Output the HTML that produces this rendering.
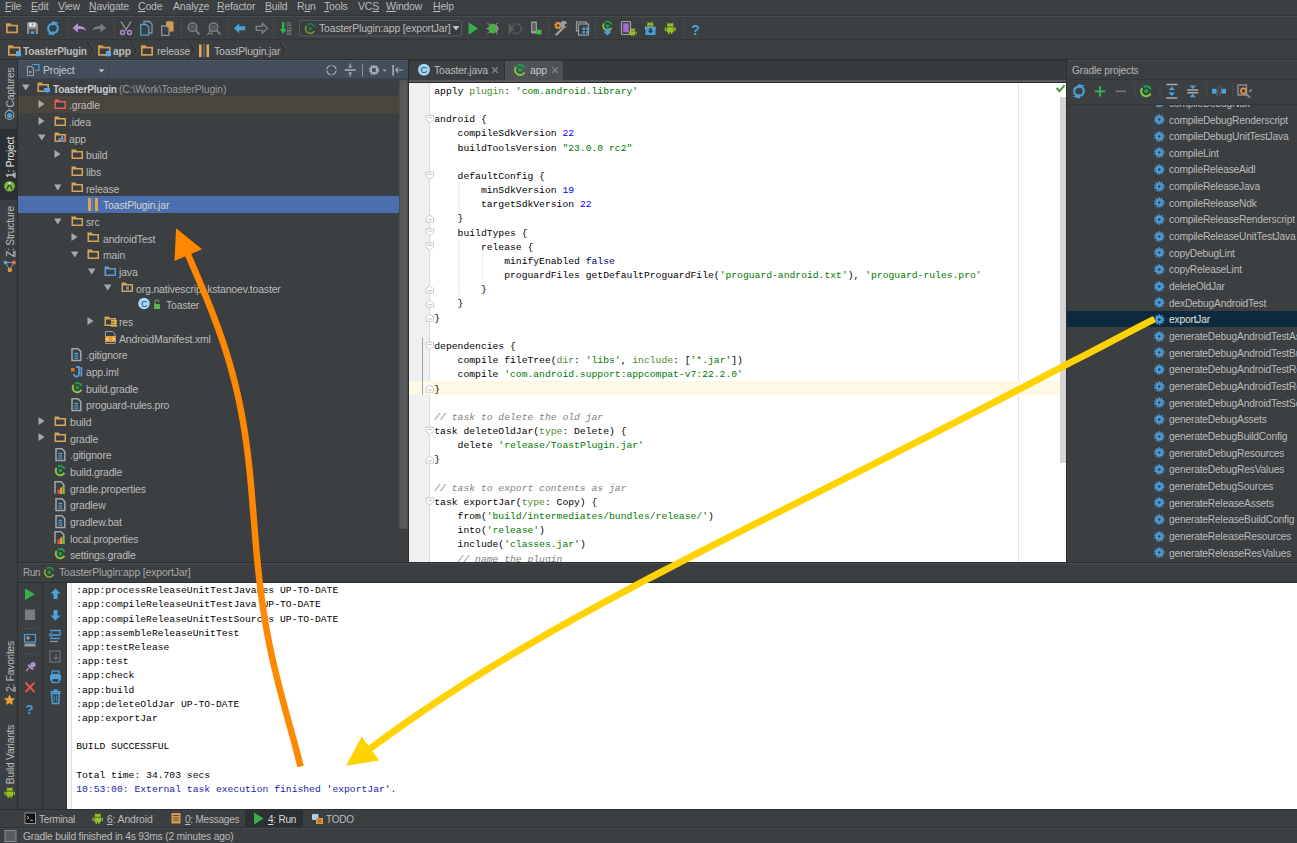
<!DOCTYPE html>
<html><head><meta charset="utf-8">
<style>
*{margin:0;padding:0;box-sizing:border-box}
html,body{width:1297px;height:843px;overflow:hidden;background:#3c3f41}
body{position:relative;font-family:"Liberation Sans",sans-serif;font-size:11px;color:#bbbbbb}
.a{position:absolute}
.t{position:absolute;white-space:pre;line-height:13px}
.mono{font-family:"Liberation Mono",monospace;font-size:9.71px;letter-spacing:0;line-height:14.17px}
svg{position:absolute;overflow:visible}
.u{text-decoration:underline;text-underline-offset:1px}
.s{color:#007800}.n{color:#0000ff}.na{color:#4e8a2a}.c{color:#808080;font-style:italic}.kw{color:#000080}
</style></head><body>

<div class="a" style="left:0px;top:0px;width:1297px;height:15px;background:#3c3f41;"></div>
<div class="a" style="left:0px;top:15px;width:1297px;height:1px;background:#323435;"></div>
<div class="a" style="left:0px;top:16px;width:1297px;height:1px;background:#4a4d4f;"></div>
<div class="a" style="left:0px;top:39px;width:1297px;height:1px;background:#323435;"></div>
<div class="a" style="left:0px;top:59px;width:1297px;height:1px;background:#2f3133;"></div>
<div class="a" style="left:17px;top:60px;width:1px;height:749px;background:#2b2d2e;"></div>
<div class="a" style="left:0px;top:129px;width:17px;height:71px;background:#2d3032;"></div>
<div class="a" style="left:18px;top:60px;width:390px;height:19px;background:#434d5c;border-top:1px solid #4f596b;border-bottom:1px solid #3a4350"></div>
<div class="a" style="left:18px;top:96px;width:381px;height:16.7px;background:#4a463e;"></div>
<div class="a" style="left:18px;top:196px;width:381px;height:16.7px;background:#4b6eaf;"></div>
<div class="a" style="left:398.6px;top:80px;width:9.4px;height:448.7px;background:#58595a;border-radius:2px;box-shadow:inset 1px 0 1px #4a4c4e, inset -1px 0 1px #4a4c4e"></div>
<div class="a" style="left:408px;top:60px;width:1px;height:503px;background:#2b2d2e;"></div>
<div class="a" style="left:505px;top:61px;width:59px;height:19px;background:#4e5254;"></div>
<div class="a" style="left:409px;top:80px;width:658px;height:2px;background:#55595c;"></div>
<div class="a" style="left:409px;top:82px;width:658px;height:1px;background:#2a2c2d;"></div>
<div class="a" style="left:409px;top:83px;width:658px;height:479px;background:#ffffff;"></div>
<div class="a" style="left:409px;top:83px;width:21px;height:479px;background:#f0f0f0;"></div>
<div class="a" style="left:429px;top:83px;width:1px;height:479px;background:#d9d9d9;"></div>
<div class="a" style="left:1018px;top:83px;width:1px;height:479px;background:#e3e3e3;"></div>
<div class="a" style="left:409px;top:381px;width:651px;height:14px;background:#fdf9e5;"></div>
<div class="a" style="left:1060px;top:97px;width:6px;height:366px;background:#d4d4d4;"></div>
<div class="a" style="left:1066px;top:60px;width:1px;height:503px;background:#2b2d2e;"></div>
<div class="a" style="left:1067px;top:60px;width:230px;height:20px;background:#3c3f41;border-top:1px solid #4a4d4f;border-bottom:1px solid #323435"></div>
<div class="a" style="left:1067px;top:104px;width:230px;height:1px;background:#323435;"></div>
<div class="a" style="left:1067px;top:310.5px;width:230px;height:16.5px;background:#0d293e;"></div>
<div class="a" style="left:18px;top:562px;width:1279px;height:1px;background:#2b2d2e;"></div>
<div class="a" style="left:18px;top:563px;width:1279px;height:1px;background:#4a4d4f;"></div>
<div class="a" style="left:18px;top:581.5px;width:1279px;height:1.2px;background:#2b2d2e;"></div>
<div class="a" style="left:42px;top:583px;width:2px;height:226px;background:#333537;"></div>
<div class="a" style="left:66px;top:583px;width:1px;height:226px;background:#333537;"></div>
<div class="a" style="left:67px;top:583px;width:1230px;height:226px;background:#ffffff;"></div>
<div class="a" style="left:67px;top:583px;width:5px;height:226px;background:#f8f8f8;"></div>
<div class="a" style="left:71px;top:583px;width:1px;height:226px;background:#e0e0e0;"></div>
<div class="a" style="left:0px;top:809px;width:1297px;height:1px;background:#2b2d2e;"></div>
<div class="a" style="left:245px;top:810px;width:58px;height:17px;background:#2d3032;"></div>
<div class="a" style="left:0px;top:827px;width:1297px;height:1px;background:#2f3133;"></div>
<div class="a" style="left:0px;top:828px;width:1297px;height:1px;background:#45484a;"></div>
<svg style="left:0px;top:0px;" width="1297" height="843" viewBox="0 0 1297 843"><path d="M6 23.2 h4.5 l1.3 1.5 h6.2 v8.5 h-12z" fill="#d69d52"/><rect x="7.7" y="26.4" width="8.6" height="5.1" fill="#3a3d3f"/><path d="M27 22.5 h9.5 l1.5 1.5 v10 h-11z" fill="#8e9092"/><rect x="29.3" y="22.5" width="6.2" height="4.2" fill="#f0f0f0"/><rect x="31.5" y="23.3" width="2" height="2.4" fill="#8e9092"/><rect x="29" y="29" width="7" height="5" fill="#4e5254"/><rect x="31" y="31.5" width="3" height="2.5" fill="#4aa3e0"/><g transform="translate(53 28.3)"><path d="M-0.5 -4.6 A4.6 4.6 0 0 0 -1.5 4.4" stroke="#4a9fd8" stroke-width="2.1" fill="none"/><path d="M-6 5.6 L1 2.6 L1 7.2z" fill="#4a9fd8"/><path d="M0.5 4.6 A4.6 4.6 0 0 0 1.5 -4.4" stroke="#4a9fd8" stroke-width="2.1" fill="none"/><path d="M6 -5.6 L-1 -2.6 L-1 -7.2z" fill="#4a9fd8"/></g><line x1="68.5" y1="19" x2="68.5" y2="38" stroke="#5a5d5f" stroke-width="1" stroke-dasharray="1 2"/><path d="M72.5 28 l5.5 -5 v3 c4 0 7.5 1 8 5 c-1.5 -2 -4 -2.2 -8 -2 v3.5z" fill="#b38fd6"/><path d="M106 28 l-5.5 -5 v3 c-4 0 -7.5 1 -8 5 c1.5 -2 4 -2.2 8 -2 v3.5z" fill="#787a7c"/><line x1="114" y1="19" x2="114" y2="38" stroke="#5a5d5f" stroke-width="1" stroke-dasharray="1 2"/><path d="M121 21.5 l5.5 9 M131 21.5 l-5.5 9" stroke="#9a9a9a" stroke-width="1.3"/><circle cx="122.5" cy="32.5" r="2" fill="none" stroke="#b38fd6" stroke-width="1.4"/><circle cx="129.5" cy="32.5" r="2" fill="none" stroke="#b38fd6" stroke-width="1.4"/><path d="M144 21.5 h5.5 l2.5 2.5 v9 h-8z" fill="none" stroke="#8e9092" stroke-width="1.3"/><path d="M140.7 24.5 h5.5 l2.5 2.5 v8.2 h-8z" fill="#3c3f41" stroke="#4a9fd8" stroke-width="1.3"/><rect x="166" y="21.5" width="7.5" height="10" fill="#d69d52"/><rect x="168" y="20.8" width="3.5" height="1.8" fill="#8e9092"/><path d="M161.7 26 h5 l2.3 2.3 v7 h-7.3z" fill="#3c3f41" stroke="#8e9092" stroke-width="1.3"/><line x1="181.5" y1="19" x2="181.5" y2="38" stroke="#5a5d5f" stroke-width="1" stroke-dasharray="1 2"/><circle cx="192.5" cy="27.2" r="4.2" fill="none" stroke="#7d7f81" stroke-width="1.6"/><circle cx="192.5" cy="27.2" r="2.6" fill="#5a5d60"/><line x1="195.7" y1="30.4" x2="199.5" y2="34.2" stroke="#7d7f81" stroke-width="2"/><circle cx="213.5" cy="27.2" r="4.2" fill="none" stroke="#7d7f81" stroke-width="1.6"/><circle cx="213.5" cy="27.2" r="2.6" fill="#5a5d60"/><line x1="216.7" y1="30.4" x2="220.5" y2="34.2" stroke="#7d7f81" stroke-width="2"/><path d="M207.5 35.5 l2.5 -6 l2.5 6 M208.5 33.5 h3" stroke="#7d7f81" stroke-width="1" fill="none"/><line x1="228" y1="19" x2="228" y2="38" stroke="#5a5d5f" stroke-width="1" stroke-dasharray="1 2"/><path d="M234 28.3 l5.2 -5 v3 h6 v4 h-6 v3z" fill="#4a9fd8"/><path d="M267.5 28.3 l-5.2 -5 v3 h-6 v4 h6 v3z" fill="none" stroke="#808284" stroke-width="1.3"/><line x1="274" y1="19" x2="274" y2="38" stroke="#5a5d5f" stroke-width="1" stroke-dasharray="1 2"/><path d="M282 22 h2.4 v7 h2 l-3.2 5 l-3.2 -5 h2z" fill="#2fb44a"/><text x="286.5" y="26" font-family="Liberation Sans" font-size="4.6" fill="#a0a0a0">01</text><text x="286.5" y="30.6" font-family="Liberation Sans" font-size="4.6" fill="#a0a0a0">10</text><text x="286.5" y="35.2" font-family="Liberation Sans" font-size="4.6" fill="#a0a0a0">01</text><rect x="299.5" y="20.5" width="162" height="15.5" rx="2" fill="#3a3d3f" stroke="#595c5e"/><path d="M314.35 30.81 A4.7 4.7 0 1 1 306.50 25.71" stroke="#6f8f3c" stroke-width="1.7" fill="none"/><path d="M307.71 24.61 A4.7 4.7 0 0 1 314.56 26.84" stroke="#1d7a3e" stroke-width="1.7" fill="none"/><circle cx="310.2" cy="28.6" r="1.97" fill="#1d7a3e"/><path d="M452.5 26 h7 l-3.5 4.5z" fill="#c0c0c0"/><line x1="463.5" y1="19" x2="463.5" y2="38" stroke="#45484a" stroke-width="1" stroke-dasharray="1 2"/><path d="M468.5 22.3 v12.5 l9.5 -6.25z" fill="#35b04a"/><ellipse cx="492.5" cy="28.6" rx="4.3" ry="4.8" fill="#49b048"/><path d="M496.2 25.5 a2.5 3.8 0 0 1 0 6.4" fill="none" stroke="#9a9a9a" stroke-width="1.4"/><path d="M487.5 23 l2 2 M497.5 23 l-2 2 M486.5 28.6 h2 M497 28.6 h2 M487.5 34 l2 -2 M497.5 34 l-2 -2" stroke="#a8a8a8" stroke-width="0.9"/><path d="M508.5 23 v11.5 l5.5 -5.75z" fill="#5c5e60"/><circle cx="516.5" cy="28.7" r="4.8" fill="none" stroke="#5c5e60" stroke-width="2.2" stroke-dasharray="1.4 1"/><rect x="531" y="21.5" width="6" height="12" rx="1" fill="#9a9c9e"/><rect x="532.3" y="23" width="3.4" height="8" fill="#5e6062"/><circle cx="539" cy="32" r="2.6" fill="#3fbf3f"/><path d="M536 29.8 l1 1 M542 29.8 l-1 1 M536 34.2 l1 -1 M542 34.2 l-1 -1" stroke="#3fbf3f" stroke-width="0.7"/><line x1="549" y1="19" x2="549" y2="38" stroke="#5a5d5f" stroke-width="1" stroke-dasharray="1 2"/><g transform="translate(558.2 25.5)"><circle r="2.6" fill="none" stroke="#e8933a" stroke-width="2.4" stroke-dasharray="1.3 0.7"/><circle r="2.2" fill="none" stroke="#e8933a" stroke-width="1.6"/></g><path d="M556.5 34.5 L564 27" stroke="#9a9c9e" stroke-width="2.4" stroke-linecap="round"/><path d="M563 28 a3.6 3.6 0 1 1 4.2 -4.5 l-2.2 0.6 l-0.6 1.8 l1.8 1 l1.4 -1.8 a3.6 3.6 0 0 1 -4.6 2.9z" fill="#9a9c9e"/><rect x="576.5" y="22" width="10" height="9" fill="none" stroke="#9a9c9e" stroke-width="1.2"/><rect x="578.5" y="24" width="10" height="11" fill="#3c3f41" stroke="#9a9c9e" stroke-width="1.2"/><rect x="582.5" y="27.5" width="2.5" height="2.5" fill="#4a9fd8"/><rect x="586" y="27.5" width="2.5" height="2.5" fill="#4a9fd8"/><rect x="582.5" y="31" width="2.5" height="2.5" fill="#4a9fd8"/><rect x="586" y="31" width="2.5" height="2.5" fill="#4a9fd8"/><line x1="595" y1="19" x2="595" y2="38" stroke="#5a5d5f" stroke-width="1" stroke-dasharray="1 2"/><path d="M611.30 28.02 A4.3 4.3 0 1 1 604.11 23.35" stroke="#8cc63f" stroke-width="1.8" fill="none"/><path d="M605.22 22.35 A4.3 4.3 0 0 1 611.49 24.39" stroke="#1e9e4a" stroke-width="1.8" fill="none"/><circle cx="607.5" cy="26" r="1.81" fill="#1e9e4a"/><path d="M605.7 28.5 h3.6 v3 h2.2 l-4 4 l-4 -4 h2.2z" fill="#4aa3e0"/><rect x="621.5" y="21.5" width="9" height="13" rx="1" fill="none" stroke="#a0a2a4" stroke-width="1.2"/><rect x="623.2" y="23.3" width="5.6" height="9" fill="#a46bd0"/><g transform="translate(628.5 27.5) scale(0.72)"><path d="M2.5 4.5 a3.5 3.2 0 0 1 7 0z" fill="#97c024"/><rect x="2.5" y="5.2" width="7" height="5" rx="0.8" fill="#97c024"/><rect x="0.5" y="5.2" width="1.4" height="4" rx="0.7" fill="#97c024"/><rect x="10.1" y="5.2" width="1.4" height="4" rx="0.7" fill="#97c024"/><rect x="3.8" y="9.5" width="1.5" height="2.5" fill="#97c024"/><rect x="6.7" y="9.5" width="1.5" height="2.5" fill="#97c024"/><line x1="3" y1="0.5" x2="4" y2="2" stroke="#97c024" stroke-width="0.8"/><line x1="9" y1="0.5" x2="8" y2="2" stroke="#97c024" stroke-width="0.8"/></g><g transform="translate(644.5 21.2) scale(0.95)"><path d="M2.5 4.5 a3.5 3.2 0 0 1 7 0z" fill="#97c024"/><rect x="2.5" y="5.2" width="7" height="5" rx="0.8" fill="#97c024"/><rect x="0.5" y="5.2" width="1.4" height="4" rx="0.7" fill="#97c024"/><rect x="10.1" y="5.2" width="1.4" height="4" rx="0.7" fill="#97c024"/><rect x="3.8" y="9.5" width="1.5" height="2.5" fill="#97c024"/><rect x="6.7" y="9.5" width="1.5" height="2.5" fill="#97c024"/><line x1="3" y1="0.5" x2="4" y2="2" stroke="#97c024" stroke-width="0.8"/><line x1="9" y1="0.5" x2="8" y2="2" stroke="#97c024" stroke-width="0.8"/></g><rect x="645.5" y="27" width="10" height="8" fill="#4a9fd8"/><path d="M649.2 28.3 h2.6 v2.5 h1.6 l-2.9 2.8 l-2.9 -2.8 h1.6z" fill="#2c3e50"/><g transform="translate(664.2 22) scale(1.0)"><path d="M2.5 4.5 a3.5 3.2 0 0 1 7 0z" fill="#97c024"/><rect x="2.5" y="5.2" width="7" height="5" rx="0.8" fill="#97c024"/><rect x="0.5" y="5.2" width="1.4" height="4" rx="0.7" fill="#97c024"/><rect x="10.1" y="5.2" width="1.4" height="4" rx="0.7" fill="#97c024"/><rect x="3.8" y="9.5" width="1.5" height="2.5" fill="#97c024"/><rect x="6.7" y="9.5" width="1.5" height="2.5" fill="#97c024"/><line x1="3" y1="0.5" x2="4" y2="2" stroke="#97c024" stroke-width="0.8"/><line x1="9" y1="0.5" x2="8" y2="2" stroke="#97c024" stroke-width="0.8"/></g><line x1="684" y1="19" x2="684" y2="38" stroke="#5a5d5f" stroke-width="1" stroke-dasharray="1 2"/><text x="691.2" y="35" font-family="Liberation Sans" font-weight="bold" font-size="14" fill="#4a9fd8">?</text><path d="M8 45.2 h4.5 l1.3 1.5 h6.7 v9.0 h-12.5z" fill="#d69d52"/><rect x="9.7" y="48.400000000000006" width="9.1" height="5.6" fill="#3a3d3f"/><rect x="16" y="51" width="5" height="5.3" fill="#5da5e3"/><path d="M87.3 41.5 L93.3 50.5 L87.3 59.5" fill="none" stroke="#2a2c2d" stroke-width="1.2"/><path d="M88.5 41.5 L94.5 50.5 L88.5 59.5" fill="none" stroke="#505355" stroke-width="0.8"/><path d="M98 45.2 h4.5 l1.3 1.5 h6.7 v9.0 h-12.5z" fill="#d69d52"/><rect x="99.7" y="48.400000000000006" width="9.1" height="5.6" fill="#3a3d3f"/><rect x="106" y="51" width="5" height="5.3" fill="#5da5e3"/><path d="M130.5 41.5 L136.5 50.5 L130.5 59.5" fill="none" stroke="#2a2c2d" stroke-width="1.2"/><path d="M131.7 41.5 L137.7 50.5 L131.7 59.5" fill="none" stroke="#505355" stroke-width="0.8"/><path d="M141 45.2 h4.5 l1.3 1.5 h6.2 v9.0 h-12z" fill="#d69d52"/><rect x="142.7" y="48.400000000000006" width="8.6" height="5.6" fill="#3a3d3f"/><path d="M188.5 41.5 L194.5 50.5 L188.5 59.5" fill="none" stroke="#2a2c2d" stroke-width="1.2"/><path d="M189.7 41.5 L195.7 50.5 L189.7 59.5" fill="none" stroke="#505355" stroke-width="0.8"/><rect x="199" y="44.5" width="2.6" height="12.5" fill="#e0a75a"/><rect x="206.5" y="44.5" width="2.6" height="12.5" fill="#e0a75a"/><line x1="204" y1="44.5" x2="204" y2="57" stroke="#a8a8a8" stroke-width="1.2" stroke-dasharray="1 1"/><path d="M279.5 41.5 L285.5 50.5 L279.5 59.5" fill="none" stroke="#2a2c2d" stroke-width="1.2"/><path d="M280.7 41.5 L286.7 50.5 L280.7 59.5" fill="none" stroke="#505355" stroke-width="0.8"/><path d="M27.5 66.5 h4 l2 2 v7 h-6z" fill="none" stroke="#9a9c9e" stroke-width="1.1"/><rect x="29" y="71" width="2.5" height="2" fill="#9a9c9e"/><path d="M32 64.5 h7 v6 h-4" fill="none" stroke="#4a9fd8" stroke-width="1.2"/><path d="M98.6 69.3 h5.8 l-2.9 3.2z" fill="#b8bcc2"/><line x1="109.5" y1="61" x2="109.5" y2="79" stroke="#3b4350" stroke-width="1"/><line x1="110.5" y1="61" x2="110.5" y2="79" stroke="#4d5769" stroke-width="1"/><circle cx="331.5" cy="70" r="4.6" fill="none" stroke="#a9acaf" stroke-width="1.4"/><path d="M331.5 64.5 v3.5 M331.5 72 v3.5 M326 70 h3.5 M334 70 h3.5" stroke="#46505f" stroke-width="1.6"/><path d="M344.7 70 h11" stroke="#a9acaf" stroke-width="1.6"/><path d="M350.2 63.5 v3.8 M350.2 72.7 v3.8" stroke="#a9acaf" stroke-width="1.2"/><path d="M348.2 66 l2 2 l2 -2 M348.2 74 l2 -2 l2 2" stroke="#a9acaf" stroke-width="1" fill="none"/><line x1="362.5" y1="63.5" x2="362.5" y2="76.5" stroke="#8a8f96" stroke-width="1"/><g transform="translate(374 70)"><circle r="3.8" fill="none" stroke="#a9acaf" stroke-width="2.6" stroke-dasharray="1.5 0.9"/><circle r="3.1" fill="none" stroke="#a9acaf" stroke-width="1.8"/></g><path d="M382.5 69.5 h4 l-2 2.2z" fill="#a9acaf"/><rect x="392.3" y="65" width="1.6" height="10.5" fill="#a9acaf"/><path d="M395.5 70 h7.5 M395.5 70 l2.8 -2.5 M395.5 70 l2.8 2.5" stroke="#a9acaf" stroke-width="1.1" fill="none"/><circle cx="9.5" cy="115" r="4.3" fill="none" stroke="#9a9c9e" stroke-width="1.2"/><circle cx="9.5" cy="115.5" r="2.5" fill="#4a9fd8"/><path d="M7.5 110.5 l2 -1.5 l2 1.5" stroke="#9a9c9e" fill="none"/><circle cx="9.5" cy="186.2" r="5.3" fill="#7cba3e"/><path d="M6.8 189.5 l2.7 -6 l2.7 6" stroke="#3c3f41" stroke-width="1.3" fill="none"/><circle cx="9.5" cy="183.5" r="1.2" fill="#e8e8e8"/><circle cx="5.5" cy="262.5" r="2" fill="#4a9fd8"/><circle cx="14" cy="262.5" r="2" fill="#e0604a"/><circle cx="9.8" cy="270" r="2.2" fill="#e09a3a"/><path d="M5.5 262.5 L14 262.5 M5.5 262.5 L9.8 270 M14 262.5 L9.8 270" stroke="#9a9c9e" stroke-width="0.9"/><path d="M9.5 694.5 l1.7 3.6 l3.9 0.4 l-2.9 2.6 l0.8 3.9 l-3.5 -2 l-3.5 2 l0.8 -3.9 l-2.9 -2.6 l3.9 -0.4z" fill="#e8a03a"/><g transform="translate(4 786.5) scale(0.95)"><path d="M2.5 4.5 a3.5 3.2 0 0 1 7 0z" fill="#97c024"/><rect x="2.5" y="5.2" width="7" height="5" rx="0.8" fill="#97c024"/><rect x="0.5" y="5.2" width="1.4" height="4" rx="0.7" fill="#97c024"/><rect x="10.1" y="5.2" width="1.4" height="4" rx="0.7" fill="#97c024"/><rect x="3.8" y="9.5" width="1.5" height="2.5" fill="#97c024"/><rect x="6.7" y="9.5" width="1.5" height="2.5" fill="#97c024"/><line x1="3" y1="0.5" x2="4" y2="2" stroke="#97c024" stroke-width="0.8"/><line x1="9" y1="0.5" x2="8" y2="2" stroke="#97c024" stroke-width="0.8"/></g><circle cx="424" cy="69.7" r="6" fill="#9fd4f5"/><text x="420.6" y="73.3" font-family="Liberation Sans" font-size="9.5" fill="#2a4a6a">C</text><path d="M524.41 72.35 A5 5 0 1 1 516.06 66.92" stroke="#80c640" stroke-width="2" fill="none"/><path d="M517.35 65.76 A5 5 0 0 1 524.64 68.13" stroke="#1aa04a" stroke-width="2" fill="none"/><circle cx="520" cy="70" r="2.10" fill="#1aa04a"/><line x1="409" y1="60.5" x2="1066" y2="60.5" stroke="#2f3133"/><line x1="504.5" y1="61" x2="504.5" y2="80" stroke="#2f3133"/><line x1="563.5" y1="61" x2="563.5" y2="80" stroke="#2f3133"/><rect x="564" y="61" width="502" height="19" fill="#383b3d"/><path d="M492.2 67.3 l5.6 5.6 M497.8 67.3 l-5.6 5.6" stroke="#7c7e80" stroke-width="1.5"/><path d="M552.3 67.3 l5.6 5.6 M557.9 67.3 l-5.6 5.6" stroke="#7c7e80" stroke-width="1.5"/><g transform="translate(1079 91.2)"><path d="M-0.5 -4.6 A4.6 4.6 0 0 0 -1.5 4.4" stroke="#4a9fd8" stroke-width="2.1" fill="none"/><path d="M-6 5.6 L1 2.6 L1 7.2z" fill="#4a9fd8"/><path d="M0.5 4.6 A4.6 4.6 0 0 0 1.5 -4.4" stroke="#4a9fd8" stroke-width="2.1" fill="none"/><path d="M6 -5.6 L-1 -2.6 L-1 -7.2z" fill="#4a9fd8"/></g><path d="M1094.8 91.3 h10.5 M1100 86 v10.6" stroke="#39b54a" stroke-width="1.8"/><path d="M1115.5 91.3 h10.5" stroke="#737577" stroke-width="1.6"/><line x1="1134.5" y1="83" x2="1134.5" y2="101" stroke="#5a5d5f" stroke-width="1" stroke-dasharray="1 2"/><path d="M1150.61 93.55 A5 5 0 1 1 1142.26 88.12" stroke="#80c640" stroke-width="2.1" fill="none"/><path d="M1143.55 86.96 A5 5 0 0 1 1150.84 89.33" stroke="#1aa04a" stroke-width="2.1" fill="none"/><circle cx="1146.2" cy="91.2" r="2.10" fill="#1aa04a"/><line x1="1160" y1="83" x2="1160" y2="101" stroke="#5a5d5f" stroke-width="1" stroke-dasharray="1 2"/><path d="M1166.3 84.5 h11 M1166.3 98 h11" stroke="#a8aaac" stroke-width="1.4"/><path d="M1171.8 86.5 l3.3 3.5 h-6.6z M1171.8 96 l3.3 -3.5 h-6.6z" fill="#4aa3e0"/><path d="M1187.3 90 h11 M1187.3 92.7 h11" stroke="#a8aaac" stroke-width="1.4"/><path d="M1192.8 89 l3.3 -3.5 h-6.6z M1192.8 93.7 l3.3 3.5 h-6.6z" fill="#4aa3e0"/><line x1="1206.5" y1="83" x2="1206.5" y2="101" stroke="#5a5d5f" stroke-width="1" stroke-dasharray="1 2"/><rect x="1212" y="88.8" width="4.5" height="4.8" fill="#4aa3e0"/><rect x="1221.5" y="88.8" width="4.5" height="4.8" fill="#4aa3e0"/><path d="M1216.8 96.5 l2.5 -11 M1219.6 96.5 l2.5 -11" stroke="#5d6062" stroke-width="1"/><line x1="1233" y1="83" x2="1233" y2="101" stroke="#5a5d5f" stroke-width="1" stroke-dasharray="1 2"/><rect x="1238" y="85" width="8.5" height="10" fill="none" stroke="#8e9092" stroke-width="1.4"/><circle cx="1243.5" cy="91" r="2.6" fill="none" stroke="#e8933a" stroke-width="1.6"/><path d="M1245 93 l5 4.5 M1249 91.5 l3 -1.5" stroke="#8e9092" stroke-width="1.8"/><path d="M426 115.44 h7.5 v4.2 l-3.75 3 l-3.75 -3z" fill="#fff" stroke="#c4c4c4" stroke-width="0.9"/><path d="M427.8 117.74 h4" stroke="#b0b0b0" stroke-width="0.8"/><path d="M426 172.12 h7.5 v4.2 l-3.75 3 l-3.75 -3z" fill="#fff" stroke="#c4c4c4" stroke-width="0.9"/><path d="M427.8 174.42000000000002 h4" stroke="#b0b0b0" stroke-width="0.8"/><path d="M426 228.79999999999998 h7.5 v4.2 l-3.75 3 l-3.75 -3z" fill="#fff" stroke="#c4c4c4" stroke-width="0.9"/><path d="M427.8 231.1 h4" stroke="#b0b0b0" stroke-width="0.8"/><path d="M426 242.97 h7.5 v4.2 l-3.75 3 l-3.75 -3z" fill="#fff" stroke="#c4c4c4" stroke-width="0.9"/><path d="M427.8 245.27 h4" stroke="#b0b0b0" stroke-width="0.8"/><path d="M426 342.15999999999997 h7.5 v4.2 l-3.75 3 l-3.75 -3z" fill="#fff" stroke="#c4c4c4" stroke-width="0.9"/><path d="M427.8 344.46 h4" stroke="#b0b0b0" stroke-width="0.8"/><path d="M426 427.17999999999995 h7.5 v4.2 l-3.75 3 l-3.75 -3z" fill="#fff" stroke="#c4c4c4" stroke-width="0.9"/><path d="M427.8 429.47999999999996 h4" stroke="#b0b0b0" stroke-width="0.8"/><path d="M426 498.03 h7.5 v4.2 l-3.75 3 l-3.75 -3z" fill="#fff" stroke="#c4c4c4" stroke-width="0.9"/><path d="M427.8 500.33 h4" stroke="#b0b0b0" stroke-width="0.8"/><path d="M426 222.13 h7.5 v-4.2 l-3.75 -3 l-3.75 3z" fill="#fff" stroke="#c4c4c4" stroke-width="0.9"/><path d="M427.8 219.73 h4" stroke="#b0b0b0" stroke-width="0.8"/><path d="M426 292.98 h7.5 v-4.2 l-3.75 -3 l-3.75 3z" fill="#fff" stroke="#c4c4c4" stroke-width="0.9"/><path d="M427.8 290.58000000000004 h4" stroke="#b0b0b0" stroke-width="0.8"/><path d="M426 307.15 h7.5 v-4.2 l-3.75 -3 l-3.75 3z" fill="#fff" stroke="#c4c4c4" stroke-width="0.9"/><path d="M427.8 304.75 h4" stroke="#b0b0b0" stroke-width="0.8"/><path d="M426 321.32 h7.5 v-4.2 l-3.75 -3 l-3.75 3z" fill="#fff" stroke="#c4c4c4" stroke-width="0.9"/><path d="M427.8 318.92 h4" stroke="#b0b0b0" stroke-width="0.8"/><path d="M426 392.16999999999996 h7.5 v-4.2 l-3.75 -3 l-3.75 3z" fill="#fff" stroke="#c4c4c4" stroke-width="0.9"/><path d="M427.8 389.77 h4" stroke="#b0b0b0" stroke-width="0.8"/><path d="M426 463.02 h7.5 v-4.2 l-3.75 -3 l-3.75 3z" fill="#fff" stroke="#c4c4c4" stroke-width="0.9"/><path d="M427.8 460.62 h4" stroke="#b0b0b0" stroke-width="0.8"/><line x1="422.5" y1="338" x2="422.5" y2="395" stroke="#8fa5c0" stroke-width="1"/><line x1="459" y1="182" x2="459" y2="209" stroke="#e4e4e4" stroke-width="1"/><line x1="459" y1="240" x2="459" y2="295" stroke="#e4e4e4" stroke-width="1"/><line x1="482.5" y1="253" x2="482.5" y2="281" stroke="#e0e0e0" stroke-width="1" stroke-dasharray="1 1"/><path d="M1056.5 88 l3 3.2 l5 -5.8" stroke="#4c9a3c" stroke-width="2" fill="none"/><path d="M53.36 574.46 A4.6 4.6 0 1 1 45.68 569.47" stroke="#78a83a" stroke-width="1.8" fill="none"/><path d="M46.86 568.40 A4.6 4.6 0 0 1 53.57 570.58" stroke="#2a9040" stroke-width="1.8" fill="none"/><circle cx="49.3" cy="572.3" r="1.93" fill="#2a9040"/><path d="M25 588.5 v11.5 l10 -5.75z" fill="#35b04a"/><rect x="25" y="609.5" width="10" height="10.5" fill="#7a7c7e"/><line x1="30" y1="628.5" x2="30" y2="629.5" stroke="#5a5d5f" stroke-width="1" /><line x1="22" y1="628.5" x2="39" y2="628.5" stroke="#5a5d5f" stroke-dasharray="1 2"/><line x1="22" y1="654" x2="39" y2="654" stroke="#5a5d5f" stroke-dasharray="1 2"/><rect x="24.5" y="634.5" width="11" height="7.5" fill="none" stroke="#4a9fd8" stroke-width="1.2"/><rect x="26.5" y="636.5" width="3" height="3" fill="#9a9c9e"/><rect x="24.5" y="643.5" width="11" height="3" fill="#9a9c9e"/><path d="M26 671 l3.5 -3.5" stroke="#9a9c9e" stroke-width="1.2"/><path d="M29 664 l5 5 l-2 1 l-4.5 -4.5z" fill="#b38fd6"/><circle cx="33" cy="664.5" r="2.6" fill="#b38fd6"/><path d="M25.5 682.5 l9 9.5 M34.5 682.5 l-9 9.5" stroke="#e0574a" stroke-width="2"/><text x="25.5" y="714" font-family="Liberation Sans" font-weight="bold" font-size="13" fill="#4a9fd8">?</text><path d="M55.5 588.5 l5 5 h-3 v5.5 h-4 v-5.5 h-3z" fill="#4aa3e0"/><path d="M55.5 620.5 l5 -5 h-3 v-5.5 h-4 v5.5 h-3z" fill="#4aa3e0"/><path d="M50 630.5 h10 v4.5 h-8" fill="none" stroke="#4aa3e0" stroke-width="1.3"/><path d="M50 638.5 h10" stroke="#4aa3e0" stroke-width="1.3"/><path d="M52 633 l-2.5 2 l2.5 2" fill="none" stroke="#4aa3e0" stroke-width="1.2"/><path d="M50 641.5 h8" stroke="#9a9c9e" stroke-width="1.2"/><rect x="50" y="651" width="10" height="11" fill="none" stroke="#6e7072" stroke-width="1.2"/><path d="M56 654 v5 M53.5 657 l2.5 2.5 l2.5 -2.5" stroke="#6e7072" stroke-width="1.1" fill="none"/><rect x="50" y="675" width="11" height="5.5" fill="#4aa3e0"/><rect x="52" y="671" width="7" height="3.5" fill="none" stroke="#4aa3e0" stroke-width="1.2"/><rect x="52" y="678.5" width="7" height="4" fill="#3c3f41" stroke="#4aa3e0" stroke-width="1.2"/><rect x="50.5" y="691" width="10" height="1.6" fill="#4aa3e0"/><rect x="53.5" y="689.5" width="4" height="1.5" fill="#4aa3e0"/><path d="M51.5 693.5 h8 l-0.8 10 h-6.4z" fill="none" stroke="#4aa3e0" stroke-width="1.3"/><path d="M54.2 695.5 v6 M56.8 695.5 v6" stroke="#4aa3e0" stroke-width="0.9"/><rect x="25" y="813" width="10.5" height="10.5" fill="#111" stroke="#8e9092" stroke-width="1"/><path d="M27 816 l2 1.7 l-2 1.7 M30 820.3 h3" stroke="#ddd" stroke-width="0.8" fill="none"/><g transform="translate(92 812.5) scale(0.95)"><path d="M2.5 4.5 a3.5 3.2 0 0 1 7 0z" fill="#97c024"/><rect x="2.5" y="5.2" width="7" height="5" rx="0.8" fill="#97c024"/><rect x="0.5" y="5.2" width="1.4" height="4" rx="0.7" fill="#97c024"/><rect x="10.1" y="5.2" width="1.4" height="4" rx="0.7" fill="#97c024"/><rect x="3.8" y="9.5" width="1.5" height="2.5" fill="#97c024"/><rect x="6.7" y="9.5" width="1.5" height="2.5" fill="#97c024"/><line x1="3" y1="0.5" x2="4" y2="2" stroke="#97c024" stroke-width="0.8"/><line x1="9" y1="0.5" x2="8" y2="2" stroke="#97c024" stroke-width="0.8"/></g><rect x="171.5" y="813" width="9" height="10.5" fill="#d69d52"/><path d="M173 815.5 h6 M173 817.8 h6 M173 820.1 h6" stroke="#5e4420" stroke-width="0.9"/><path d="M254 812.5 v12 l9.5 -6z" fill="#35b04a"/><rect x="312" y="814" width="6.5" height="6" rx="1" fill="#a9d0f0"/><rect x="316" y="818" width="7" height="6" fill="#e09a3a"/><path d="M317.5 820 h4 M317.5 822 h4" stroke="#704a1a" stroke-width="0.8"/><rect x="5" y="830.5" width="11" height="11" fill="#5a5c5e" stroke="#8a8c8e" stroke-width="1"/></svg>
<div class="t" style="left:5.00px;top:0.31px;font-size:11.5px;color:#bbbbbb;letter-spacing:-0.17px;transform:scaleX(0.909);transform-origin:0 0;"><span class="u">F</span>ile</div>
<div class="t" style="left:31.00px;top:0.31px;font-size:11.5px;color:#bbbbbb;letter-spacing:-0.17px;transform:scaleX(0.909);transform-origin:0 0;"><span class="u">E</span>dit</div>
<div class="t" style="left:58.00px;top:0.31px;font-size:11.5px;color:#bbbbbb;letter-spacing:-0.17px;transform:scaleX(0.909);transform-origin:0 0;"><span class="u">V</span>iew</div>
<div class="t" style="left:89.40px;top:0.31px;font-size:11.5px;color:#bbbbbb;letter-spacing:-0.17px;transform:scaleX(0.909);transform-origin:0 0;"><span class="u">N</span>avigate</div>
<div class="t" style="left:138.00px;top:0.31px;font-size:11.5px;color:#bbbbbb;letter-spacing:-0.17px;transform:scaleX(0.909);transform-origin:0 0;"><span class="u">C</span>ode</div>
<div class="t" style="left:172.70px;top:0.31px;font-size:11.5px;color:#bbbbbb;letter-spacing:-0.17px;transform:scaleX(0.909);transform-origin:0 0;">Analy<span class="u">z</span>e</div>
<div class="t" style="left:216.80px;top:0.31px;font-size:11.5px;color:#bbbbbb;letter-spacing:-0.17px;transform:scaleX(0.909);transform-origin:0 0;"><span class="u">R</span>efactor</div>
<div class="t" style="left:264.60px;top:0.31px;font-size:11.5px;color:#bbbbbb;letter-spacing:-0.17px;transform:scaleX(0.909);transform-origin:0 0;"><span class="u">B</span>uild</div>
<div class="t" style="left:296.70px;top:0.31px;font-size:11.5px;color:#bbbbbb;letter-spacing:-0.17px;transform:scaleX(0.909);transform-origin:0 0;">R<span class="u">u</span>n</div>
<div class="t" style="left:324.40px;top:0.31px;font-size:11.5px;color:#bbbbbb;letter-spacing:-0.17px;transform:scaleX(0.909);transform-origin:0 0;"><span class="u">T</span>ools</div>
<div class="t" style="left:357.70px;top:0.31px;font-size:11.5px;color:#bbbbbb;letter-spacing:-0.17px;transform:scaleX(0.909);transform-origin:0 0;">VC<span class="u">S</span></div>
<div class="t" style="left:385.50px;top:0.31px;font-size:11.5px;color:#bbbbbb;letter-spacing:-0.17px;transform:scaleX(0.909);transform-origin:0 0;"><span class="u">W</span>indow</div>
<div class="t" style="left:433.30px;top:0.31px;font-size:11.5px;color:#bbbbbb;letter-spacing:-0.17px;transform:scaleX(0.909);transform-origin:0 0;"><span class="u">H</span>elp</div>
<div class="t" style="left:319.00px;top:22.01px;font-size:11.5px;color:#bbbbbb;letter-spacing:-0.17px;transform:scaleX(0.909);transform-origin:0 0;">ToasterPlugin:app [exportJar]</div>
<div class="t" style="left:-89.80px;top:80.90px;width:200px;text-align:center;font-size:11.5px;color:#bbbbbb;letter-spacing:-0.25px;transform:rotate(-90deg) scaleX(0.89);">Captures</div>
<div class="t" style="left:-89.80px;top:151.40px;width:200px;text-align:center;font-size:11.5px;color:#e6e6e6;letter-spacing:-0.25px;transform:rotate(-90deg) scaleX(0.89);"><span class="u">1</span>: Project</div>
<div class="t" style="left:-89.80px;top:225.15px;width:200px;text-align:center;font-size:11.5px;color:#bbbbbb;letter-spacing:-0.25px;transform:rotate(-90deg) scaleX(0.89);"><span class="u">Z</span>: Structure</div>
<div class="t" style="left:-89.80px;top:660.25px;width:200px;text-align:center;font-size:11.5px;color:#bbbbbb;letter-spacing:-0.25px;transform:rotate(-90deg) scaleX(0.89);"><span class="u">2</span>: Favorites</div>
<div class="t" style="left:-89.80px;top:748.20px;width:200px;text-align:center;font-size:11.5px;color:#bbbbbb;letter-spacing:-0.25px;transform:rotate(-90deg) scaleX(0.89);">Build Variants</div>
<div class="t" style="left:23.00px;top:44.51px;font-size:11.5px;color:#bbbbbb;letter-spacing:-0.24px;transform:scaleX(0.877);transform-origin:0 0;font-weight:bold;">ToasterPlugin</div>
<div class="t" style="left:113.00px;top:44.51px;font-size:11.5px;color:#bbbbbb;letter-spacing:-0.20px;transform:scaleX(0.896);transform-origin:0 0;font-weight:bold;">app</div>
<div class="t" style="left:156.70px;top:44.51px;font-size:11.5px;color:#bbbbbb;letter-spacing:-0.17px;transform:scaleX(0.909);transform-origin:0 0;">release</div>
<div class="t" style="left:213.70px;top:44.51px;font-size:11.5px;color:#bbbbbb;letter-spacing:-0.17px;transform:scaleX(0.909);transform-origin:0 0;">ToastPlugin.jar</div>
<div class="t" style="left:42.70px;top:63.51px;font-size:11.5px;color:#c4c8ce;letter-spacing:-0.17px;transform:scaleX(0.909);transform-origin:0 0;">Project</div>
<div class="t" style="left:53.00px;top:82.71px;font-size:11.5px;color:#c9c9c9;letter-spacing:-0.24px;transform:scaleX(0.877);transform-origin:0 0;font-weight:bold;">ToasterPlugin</div>
<div class="t" style="left:118.60px;top:82.71px;font-size:11.5px;color:#9a9a9a;letter-spacing:-0.17px;transform:scaleX(0.909);transform-origin:0 0;">(C:\Work\ToasterPlugin)</div>
<svg style="left:21.5px;top:84.4px;" width="8" height="7" viewBox="0 0 8 7"><path d="M0 0.5 L7.5 0.5 L3.75 6.5Z" fill="#a9a9a9"/></svg>
<svg style="left:37.3px;top:81.4px;" width="14" height="13" viewBox="0 0 14 13"><path d="M0.5 1.5 h4 l1.5 1.5 h6 v8 h-11.5z" fill="#d7a45a"/><rect x="2" y="4.5" width="8.5" height="5" fill="#3c3f41"/><path d="M7 7 h6 v4 h-2 l-1 1.5 l-1 -1.5 h-2z" fill="#5aa0e0"/></svg>
<div class="t" style="left:69.00px;top:99.37px;font-size:11.5px;color:#bbbbbb;letter-spacing:-0.17px;transform:scaleX(0.909);transform-origin:0 0;">.gradle</div>
<svg style="left:38px;top:100.06px;" width="7" height="8" viewBox="0 0 7 8"><path d="M0.5 0 L6.5 4 L0.5 8Z" fill="#a9a9a9"/></svg>
<svg style="left:53.7px;top:98.06px;" width="13" height="12" viewBox="0 0 13 12"><path d="M0.5 1.5 h4 l1.5 1.5 h6 v8 h-11.5z" fill="#e0605a"/><rect x="2" y="4.5" width="8.5" height="5" fill="#3c3f41"/></svg>
<div class="t" style="left:69.00px;top:116.03px;font-size:11.5px;color:#bbbbbb;letter-spacing:-0.17px;transform:scaleX(0.909);transform-origin:0 0;">.idea</div>
<svg style="left:38px;top:116.72000000000001px;" width="7" height="8" viewBox="0 0 7 8"><path d="M0.5 0 L6.5 4 L0.5 8Z" fill="#a9a9a9"/></svg>
<svg style="left:53.7px;top:114.72000000000001px;" width="13" height="12" viewBox="0 0 13 12"><path d="M0.5 1.5 h4 l1.5 1.5 h6 v8 h-11.5z" fill="#d7a45a"/><rect x="2" y="4.5" width="8.5" height="5" fill="#3c3f41"/></svg>
<div class="t" style="left:69.00px;top:132.69px;font-size:11.5px;color:#bbbbbb;letter-spacing:-0.17px;transform:scaleX(0.909);transform-origin:0 0;">app</div>
<svg style="left:38px;top:134.38px;" width="8" height="7" viewBox="0 0 8 7"><path d="M0 0.5 L7.5 0.5 L3.75 6.5Z" fill="#a9a9a9"/></svg>
<svg style="left:53.7px;top:131.38px;" width="13" height="12" viewBox="0 0 13 12"><path d="M0.5 1.5 h4 l1.5 1.5 h6 v8 h-11.5z" fill="#d7a45a"/><rect x="2" y="4.5" width="8.5" height="5" fill="#3c3f41"/><rect x="7" y="5" width="2" height="6" fill="#5a9bd5"/><rect x="9.5" y="6" width="2" height="5" fill="#e0605a"/><rect x="4.5" y="7" width="2" height="4" fill="#999"/></svg>
<div class="t" style="left:86.00px;top:149.35px;font-size:11.5px;color:#bbbbbb;letter-spacing:-0.17px;transform:scaleX(0.909);transform-origin:0 0;">build</div>
<svg style="left:54.4px;top:150.04px;" width="7" height="8" viewBox="0 0 7 8"><path d="M0.5 0 L6.5 4 L0.5 8Z" fill="#a9a9a9"/></svg>
<svg style="left:71px;top:148.04px;" width="13" height="12" viewBox="0 0 13 12"><path d="M0.5 1.5 h4 l1.5 1.5 h6 v8 h-11.5z" fill="#d7a45a"/><rect x="2" y="4.5" width="8.5" height="5" fill="#3c3f41"/></svg>
<div class="t" style="left:86.00px;top:166.01px;font-size:11.5px;color:#bbbbbb;letter-spacing:-0.17px;transform:scaleX(0.909);transform-origin:0 0;">libs</div>
<svg style="left:71px;top:164.7px;" width="13" height="12" viewBox="0 0 13 12"><path d="M0.5 1.5 h4 l1.5 1.5 h6 v8 h-11.5z" fill="#d7a45a"/><rect x="2" y="4.5" width="8.5" height="5" fill="#3c3f41"/></svg>
<div class="t" style="left:86.00px;top:182.67px;font-size:11.5px;color:#bbbbbb;letter-spacing:-0.17px;transform:scaleX(0.909);transform-origin:0 0;">release</div>
<svg style="left:54.4px;top:184.36px;" width="8" height="7" viewBox="0 0 8 7"><path d="M0 0.5 L7.5 0.5 L3.75 6.5Z" fill="#a9a9a9"/></svg>
<svg style="left:71px;top:181.36px;" width="13" height="12" viewBox="0 0 13 12"><path d="M0.5 1.5 h4 l1.5 1.5 h6 v8 h-11.5z" fill="#d7a45a"/><rect x="2" y="4.5" width="8.5" height="5" fill="#3c3f41"/></svg>
<div class="t" style="left:103.00px;top:199.33px;font-size:11.5px;color:#d2d2d2;letter-spacing:-0.17px;transform:scaleX(0.909);transform-origin:0 0;">ToastPlugin.jar</div>
<svg style="left:88px;top:198.01999999999998px;" width="11" height="14" viewBox="0 0 11 14"><rect x="0" y="0" width="3" height="13" fill="#d7a45a"/><rect x="7" y="0" width="3" height="13" fill="#d7a45a"/><path d="M4.5 0 v13" stroke="#8c8c8c" stroke-dasharray="1.5 1"/></svg>
<div class="t" style="left:86.00px;top:215.99px;font-size:11.5px;color:#bbbbbb;letter-spacing:-0.17px;transform:scaleX(0.909);transform-origin:0 0;">src</div>
<svg style="left:54.4px;top:217.68px;" width="8" height="7" viewBox="0 0 8 7"><path d="M0 0.5 L7.5 0.5 L3.75 6.5Z" fill="#a9a9a9"/></svg>
<svg style="left:71px;top:214.68px;" width="13" height="12" viewBox="0 0 13 12"><path d="M0.5 1.5 h4 l1.5 1.5 h6 v8 h-11.5z" fill="#d7a45a"/><rect x="2" y="4.5" width="8.5" height="5" fill="#3c3f41"/></svg>
<div class="t" style="left:102.70px;top:232.65px;font-size:11.5px;color:#bbbbbb;letter-spacing:-0.17px;transform:scaleX(0.909);transform-origin:0 0;">androidTest</div>
<svg style="left:71px;top:233.33999999999997px;" width="7" height="8" viewBox="0 0 7 8"><path d="M0.5 0 L6.5 4 L0.5 8Z" fill="#a9a9a9"/></svg>
<svg style="left:87px;top:231.33999999999997px;" width="13" height="12" viewBox="0 0 13 12"><path d="M0.5 1.5 h4 l1.5 1.5 h6 v8 h-11.5z" fill="#d7a45a"/><rect x="2" y="4.5" width="8.5" height="5" fill="#3c3f41"/></svg>
<div class="t" style="left:102.70px;top:249.31px;font-size:11.5px;color:#bbbbbb;letter-spacing:-0.17px;transform:scaleX(0.909);transform-origin:0 0;">main</div>
<svg style="left:71px;top:251.0px;" width="8" height="7" viewBox="0 0 8 7"><path d="M0 0.5 L7.5 0.5 L3.75 6.5Z" fill="#a9a9a9"/></svg>
<svg style="left:87px;top:248.0px;" width="13" height="12" viewBox="0 0 13 12"><path d="M0.5 1.5 h4 l1.5 1.5 h6 v8 h-11.5z" fill="#d7a45a"/><rect x="2" y="4.5" width="8.5" height="5" fill="#3c3f41"/></svg>
<div class="t" style="left:118.60px;top:265.97px;font-size:11.5px;color:#bbbbbb;letter-spacing:-0.17px;transform:scaleX(0.909);transform-origin:0 0;">java</div>
<svg style="left:88px;top:267.65999999999997px;" width="8" height="7" viewBox="0 0 8 7"><path d="M0 0.5 L7.5 0.5 L3.75 6.5Z" fill="#a9a9a9"/></svg>
<svg style="left:103.7px;top:264.65999999999997px;" width="13" height="12" viewBox="0 0 13 12"><path d="M0.5 1.5 h4 l1.5 1.5 h6 v8 h-11.5z" fill="#5a9bd5"/><rect x="2" y="4.5" width="8.5" height="5" fill="#3c3f41"/></svg>
<div class="t" style="left:136.00px;top:282.63px;font-size:11.5px;color:#bbbbbb;letter-spacing:-0.17px;transform:scaleX(0.909);transform-origin:0 0;">org.nativescript.kstanoev.toaster</div>
<svg style="left:104px;top:284.32px;" width="8" height="7" viewBox="0 0 8 7"><path d="M0 0.5 L7.5 0.5 L3.75 6.5Z" fill="#a9a9a9"/></svg>
<svg style="left:120.8px;top:281.32px;" width="13" height="12" viewBox="0 0 13 12"><path d="M0.5 1.5 h4 l1.5 1.5 h6 v8 h-11.5z" fill="#d7a45a"/><rect x="2" y="4.5" width="8.5" height="5" fill="#3c3f41"/><rect x="5" y="5.5" width="3" height="3" fill="#5a9bd5"/></svg>
<div class="t" style="left:166.00px;top:299.29px;font-size:11.5px;color:#bbbbbb;letter-spacing:-0.17px;transform:scaleX(0.909);transform-origin:0 0;">Toaster</div>
<svg style="left:137.5px;top:296.98px;" width="30" height="14" viewBox="0 0 30 14"><circle cx="6" cy="6.5" r="5.8" fill="#a8d8f8"/><text x="3.3" y="9.5" font-family="Liberation Sans" font-size="8.5" fill="#1a3a5a">C</text><path d="M16 7 h6 v5 h-6z" fill="#5db44a"/><path d="M17 7 v-2 a2 2 0 0 1 4 0" stroke="#5db44a" stroke-width="1.2" fill="none"/></svg>
<div class="t" style="left:119.00px;top:315.95px;font-size:11.5px;color:#bbbbbb;letter-spacing:-0.17px;transform:scaleX(0.909);transform-origin:0 0;">res</div>
<svg style="left:87px;top:316.64px;" width="7" height="8" viewBox="0 0 7 8"><path d="M0.5 0 L6.5 4 L0.5 8Z" fill="#a9a9a9"/></svg>
<svg style="left:104px;top:314.64px;" width="13" height="12" viewBox="0 0 13 12"><path d="M0.5 1.5 h4 l1.5 1.5 h6 v8 h-11.5z" fill="#d7a45a"/><rect x="2" y="4.5" width="8.5" height="5" fill="#3c3f41"/><rect x="7" y="5" width="6" height="1.6" fill="#e8c040"/><rect x="7" y="7.5" width="6" height="1.6" fill="#e8c040"/><rect x="7" y="10" width="6" height="1.6" fill="#e8c040"/></svg>
<div class="t" style="left:119.00px;top:332.61px;font-size:11.5px;color:#bbbbbb;letter-spacing:-0.17px;transform:scaleX(0.909);transform-origin:0 0;">AndroidManifest.xml</div>
<svg style="left:105px;top:331.3px;" width="12" height="13" viewBox="0 0 12 13"><path d="M0.5 0.5 h7 l2.5 2.5 v9.5 h-9.5z" fill="none" stroke="#9a9a9a"/><rect x="0" y="5" width="11" height="6" fill="#e09a3a"/><path d="M3.5 6.5 l-2 1.5 l2 1.5 M7.5 6.5 l2 1.5 l-2 1.5" stroke="#fff" stroke-width="0.9" fill="none"/></svg>
<div class="t" style="left:85.80px;top:349.27px;font-size:11.5px;color:#bbbbbb;letter-spacing:-0.17px;transform:scaleX(0.909);transform-origin:0 0;">.gitignore</div>
<svg style="left:71px;top:347.96px;" width="11" height="13" viewBox="0 0 11 13"><path d="M1 0.8 h6 l2.8 2.8 v9 h-8.8z" fill="none" stroke="#a4a6a8" stroke-width="1.5"/><path d="M3.3 5.5 h4 M3.3 7.8 h4 M3.3 10.1 h4" stroke="#4a9fd8" stroke-width="1.3"/></svg>
<div class="t" style="left:85.80px;top:365.93px;font-size:11.5px;color:#bbbbbb;letter-spacing:-0.17px;transform:scaleX(0.909);transform-origin:0 0;">app.iml</div>
<svg style="left:71px;top:364.62px;" width="12" height="13" viewBox="0 0 12 13"><rect x="0" y="3" width="3.5" height="3.5" fill="#e07030"/><path d="M5 2 h3 v7 a2.5 2.5 0 0 1 -5 0" stroke="#5a9bd5" stroke-width="1.8" fill="none"/><rect x="9.5" y="2" width="1.8" height="9.5" fill="#5a9bd5"/></svg>
<div class="t" style="left:85.80px;top:382.59px;font-size:11.5px;color:#bbbbbb;letter-spacing:-0.17px;transform:scaleX(0.909);transform-origin:0 0;">build.gradle</div>
<svg style="left:70.5px;top:380.78px;" width="13" height="13" viewBox="0 0 13 13"><path d="M10.36 8.76 A4.6 4.6 0 1 1 2.68 3.77" stroke="#8cc63f" stroke-width="2" fill="none"/><path d="M3.86 2.70 A4.6 4.6 0 0 1 10.57 4.88" stroke="#1e9e4a" stroke-width="2" fill="none"/><circle cx="6.3" cy="6.6" r="1.93" fill="#1e9e4a"/></svg>
<div class="t" style="left:85.80px;top:399.25px;font-size:11.5px;color:#bbbbbb;letter-spacing:-0.17px;transform:scaleX(0.909);transform-origin:0 0;">proguard-rules.pro</div>
<svg style="left:71px;top:397.94px;" width="11" height="13" viewBox="0 0 11 13"><path d="M1 0.8 h6 l2.8 2.8 v9 h-8.8z" fill="none" stroke="#a4a6a8" stroke-width="1.5"/><path d="M3.3 5.5 h4 M3.3 7.8 h4 M3.3 10.1 h4" stroke="#4a9fd8" stroke-width="1.3"/></svg>
<div class="t" style="left:69.50px;top:415.91px;font-size:11.5px;color:#bbbbbb;letter-spacing:-0.17px;transform:scaleX(0.909);transform-origin:0 0;">build</div>
<svg style="left:37.8px;top:416.59999999999997px;" width="7" height="8" viewBox="0 0 7 8"><path d="M0.5 0 L6.5 4 L0.5 8Z" fill="#a9a9a9"/></svg>
<svg style="left:53.8px;top:414.59999999999997px;" width="13" height="12" viewBox="0 0 13 12"><path d="M0.5 1.5 h4 l1.5 1.5 h6 v8 h-11.5z" fill="#d7a45a"/><rect x="2" y="4.5" width="8.5" height="5" fill="#3c3f41"/></svg>
<div class="t" style="left:69.50px;top:432.57px;font-size:11.5px;color:#bbbbbb;letter-spacing:-0.17px;transform:scaleX(0.909);transform-origin:0 0;">gradle</div>
<svg style="left:37.8px;top:433.26px;" width="7" height="8" viewBox="0 0 7 8"><path d="M0.5 0 L6.5 4 L0.5 8Z" fill="#a9a9a9"/></svg>
<svg style="left:53.8px;top:431.26px;" width="13" height="12" viewBox="0 0 13 12"><path d="M0.5 1.5 h4 l1.5 1.5 h6 v8 h-11.5z" fill="#d7a45a"/><rect x="2" y="4.5" width="8.5" height="5" fill="#3c3f41"/></svg>
<div class="t" style="left:69.50px;top:449.23px;font-size:11.5px;color:#bbbbbb;letter-spacing:-0.17px;transform:scaleX(0.909);transform-origin:0 0;">.gitignore</div>
<svg style="left:54.5px;top:447.91999999999996px;" width="11" height="13" viewBox="0 0 11 13"><path d="M1 0.8 h6 l2.8 2.8 v9 h-8.8z" fill="none" stroke="#a4a6a8" stroke-width="1.5"/><path d="M3.3 5.5 h4 M3.3 7.8 h4 M3.3 10.1 h4" stroke="#4a9fd8" stroke-width="1.3"/></svg>
<div class="t" style="left:69.50px;top:465.89px;font-size:11.5px;color:#bbbbbb;letter-spacing:-0.17px;transform:scaleX(0.909);transform-origin:0 0;">build.gradle</div>
<svg style="left:54px;top:464.08px;" width="13" height="13" viewBox="0 0 13 13"><path d="M10.36 8.76 A4.6 4.6 0 1 1 2.68 3.77" stroke="#8cc63f" stroke-width="2" fill="none"/><path d="M3.86 2.70 A4.6 4.6 0 0 1 10.57 4.88" stroke="#1e9e4a" stroke-width="2" fill="none"/><circle cx="6.3" cy="6.6" r="1.93" fill="#1e9e4a"/></svg>
<div class="t" style="left:69.50px;top:482.55px;font-size:11.5px;color:#bbbbbb;letter-spacing:-0.17px;transform:scaleX(0.909);transform-origin:0 0;">gradle.properties</div>
<svg style="left:54px;top:481.24px;" width="12" height="13" viewBox="0 0 12 13"><path d="M1 12.6 v-11.8 h6 l2.8 2.8 v2" fill="none" stroke="#a4a6a8" stroke-width="1.5"/><rect x="3.5" y="8.5" width="2.2" height="4.5" fill="#e05a4a"/><rect x="6" y="6.5" width="2.2" height="6.5" fill="#e8a030"/><rect x="8.5" y="5" width="2.2" height="8" fill="#7cc04a"/></svg>
<div class="t" style="left:69.50px;top:499.21px;font-size:11.5px;color:#bbbbbb;letter-spacing:-0.17px;transform:scaleX(0.909);transform-origin:0 0;">gradlew</div>
<svg style="left:54.5px;top:497.9px;" width="11" height="13" viewBox="0 0 11 13"><path d="M1 0.8 h6 l2.8 2.8 v9 h-8.8z" fill="none" stroke="#a4a6a8" stroke-width="1.5"/><path d="M3.3 5.5 h4 M3.3 7.8 h4 M3.3 10.1 h4" stroke="#4a9fd8" stroke-width="1.3"/></svg>
<div class="t" style="left:69.50px;top:515.87px;font-size:11.5px;color:#bbbbbb;letter-spacing:-0.17px;transform:scaleX(0.909);transform-origin:0 0;">gradlew.bat</div>
<svg style="left:54.5px;top:514.5600000000001px;" width="11" height="13" viewBox="0 0 11 13"><path d="M1 0.8 h6 l2.8 2.8 v9 h-8.8z" fill="none" stroke="#a4a6a8" stroke-width="1.5"/><path d="M3.3 5.5 h4 M3.3 7.8 h4 M3.3 10.1 h4" stroke="#4a9fd8" stroke-width="1.3"/></svg>
<div class="t" style="left:69.50px;top:532.53px;font-size:11.5px;color:#bbbbbb;letter-spacing:-0.17px;transform:scaleX(0.909);transform-origin:0 0;">local.properties</div>
<svg style="left:54px;top:531.22px;" width="12" height="13" viewBox="0 0 12 13"><path d="M1 12.6 v-11.8 h6 l2.8 2.8 v2" fill="none" stroke="#a4a6a8" stroke-width="1.5"/><rect x="3.5" y="8.5" width="2.2" height="4.5" fill="#e05a4a"/><rect x="6" y="6.5" width="2.2" height="6.5" fill="#e8a030"/><rect x="8.5" y="5" width="2.2" height="8" fill="#7cc04a"/></svg>
<div class="t" style="left:69.50px;top:549.19px;font-size:11.5px;color:#bbbbbb;letter-spacing:-0.17px;transform:scaleX(0.909);transform-origin:0 0;">settings.gradle</div>
<svg style="left:54px;top:547.3800000000001px;" width="13" height="13" viewBox="0 0 13 13"><path d="M10.36 8.76 A4.6 4.6 0 1 1 2.68 3.77" stroke="#8cc63f" stroke-width="2" fill="none"/><path d="M3.86 2.70 A4.6 4.6 0 0 1 10.57 4.88" stroke="#1e9e4a" stroke-width="2" fill="none"/><circle cx="6.3" cy="6.6" r="1.93" fill="#1e9e4a"/></svg>
<div class="t" style="left:434.00px;top:63.51px;font-size:11.5px;color:#bbbbbb;letter-spacing:-0.17px;transform:scaleX(0.909);transform-origin:0 0;">Toaster.java</div>
<div class="t" style="left:529.50px;top:63.51px;font-size:11.5px;color:#c8c8c8;letter-spacing:-0.17px;transform:scaleX(0.909);transform-origin:0 0;">app</div>
<div class="a" style="left:409px;top:83px;width:651px;height:479px;overflow:hidden">
<div class="t mono" style="left:25.30px;top:1.93px;color:#000;">apply <span class=na>plugin</span>: <span class=s>'com.android.library'</span></div>
<div class="t mono" style="left:25.30px;top:16.10px;color:#000;"></div>
<div class="t mono" style="left:25.30px;top:30.27px;color:#000;">android {</div>
<div class="t mono" style="left:25.30px;top:44.44px;color:#000;">    compileSdkVersion <span class=n>22</span></div>
<div class="t mono" style="left:25.30px;top:58.61px;color:#000;">    buildToolsVersion <span class=s>"23.0.0 rc2"</span></div>
<div class="t mono" style="left:25.30px;top:72.78px;color:#000;"></div>
<div class="t mono" style="left:25.30px;top:86.95px;color:#000;">    defaultConfig {</div>
<div class="t mono" style="left:25.30px;top:101.12px;color:#000;">        minSdkVersion <span class=n>19</span></div>
<div class="t mono" style="left:25.30px;top:115.29px;color:#000;">        targetSdkVersion <span class=n>22</span></div>
<div class="t mono" style="left:25.30px;top:129.46px;color:#000;">    }</div>
<div class="t mono" style="left:25.30px;top:143.63px;color:#000;">    buildTypes {</div>
<div class="t mono" style="left:25.30px;top:157.80px;color:#000;">        release {</div>
<div class="t mono" style="left:25.30px;top:171.97px;color:#000;">            minifyEnabled <span class=kw>false</span></div>
<div class="t mono" style="left:25.30px;top:186.14px;color:#000;">            proguardFiles getDefaultProguardFile(<span class=s>'proguard-android.txt'</span>), <span class=s>'proguard-rules.pro'</span></div>
<div class="t mono" style="left:25.30px;top:200.31px;color:#000;">        }</div>
<div class="t mono" style="left:25.30px;top:214.48px;color:#000;">    }</div>
<div class="t mono" style="left:25.30px;top:228.65px;color:#000;">}</div>
<div class="t mono" style="left:25.30px;top:242.82px;color:#000;"></div>
<div class="t mono" style="left:25.30px;top:256.99px;color:#000;">dependencies {</div>
<div class="t mono" style="left:25.30px;top:271.16px;color:#000;">    compile fileTree(<span class=na>dir</span>: <span class=s>'libs'</span>, <span class=na>include</span>: [<span class=s>'*.jar'</span>])</div>
<div class="t mono" style="left:25.30px;top:285.33px;color:#000;">    compile <span class=s>'com.android.support:appcompat-v7:22.2.0'</span></div>
<div class="t mono" style="left:25.30px;top:299.50px;color:#000;">}</div>
<div class="t mono" style="left:25.30px;top:313.67px;color:#000;"></div>
<div class="t mono" style="left:25.30px;top:327.84px;color:#000;"><span class=c>// task to delete the old jar</span></div>
<div class="t mono" style="left:25.30px;top:342.01px;color:#000;">task deleteOldJar(<span class=na>type</span>: Delete) {</div>
<div class="t mono" style="left:25.30px;top:356.18px;color:#000;">    delete <span class=s>'release/ToastPlugin.jar'</span></div>
<div class="t mono" style="left:25.30px;top:370.35px;color:#000;">}</div>
<div class="t mono" style="left:25.30px;top:384.52px;color:#000;"></div>
<div class="t mono" style="left:25.30px;top:398.69px;color:#000;"><span class=c>// task to export contents as jar</span></div>
<div class="t mono" style="left:25.30px;top:412.86px;color:#000;">task exportJar(<span class=na>type</span>: Copy) {</div>
<div class="t mono" style="left:25.30px;top:427.03px;color:#000;">    from(<span class=s>'build/intermediates/bundles/release/'</span>)</div>
<div class="t mono" style="left:25.30px;top:441.20px;color:#000;">    into(<span class=s>'release'</span>)</div>
<div class="t mono" style="left:25.30px;top:455.37px;color:#000;">    include(<span class=s>'classes.jar'</span>)</div>
<div class="t mono" style="left:25.30px;top:469.54px;color:#000;">    <span class=c>// name the plugin</span></div>
</div>
<div class="t" style="left:1072.00px;top:63.51px;font-size:11.5px;color:#b4b4b4;letter-spacing:-0.21px;transform:scaleX(0.889);transform-origin:0 0;">Gradle projects</div>
<div class="a" style="left:1067px;top:105px;width:230px;height:457px;overflow:hidden">
<div class="t" style="left:101.60px;top:-8.15px;font-size:11.5px;color:#bbbbbb;letter-spacing:-0.21px;transform:scaleX(0.889);transform-origin:0 0;">compileDebugNdk</div>
<svg style="left:87px;top:-7.560000000000002px;" width="11" height="11" viewBox="0 0 11 11"><g transform="translate(5.3 5.5)"><circle r="4.1" fill="none" stroke="#4a9ad8" stroke-width="2.2" stroke-dasharray="1.55 1.0"/><circle r="2.5" fill="none" stroke="#4a9ad8" stroke-width="2.4"/></g></svg>
<div class="t" style="left:101.60px;top:8.51px;font-size:11.5px;color:#bbbbbb;letter-spacing:-0.21px;transform:scaleX(0.889);transform-origin:0 0;">compileDebugRenderscript</div>
<svg style="left:87px;top:9.099999999999994px;" width="11" height="11" viewBox="0 0 11 11"><g transform="translate(5.3 5.5)"><circle r="4.1" fill="none" stroke="#4a9ad8" stroke-width="2.2" stroke-dasharray="1.55 1.0"/><circle r="2.5" fill="none" stroke="#4a9ad8" stroke-width="2.4"/></g></svg>
<div class="t" style="left:101.60px;top:25.17px;font-size:11.5px;color:#bbbbbb;letter-spacing:-0.21px;transform:scaleX(0.889);transform-origin:0 0;">compileDebugUnitTestJava</div>
<svg style="left:87px;top:25.75999999999999px;" width="11" height="11" viewBox="0 0 11 11"><g transform="translate(5.3 5.5)"><circle r="4.1" fill="none" stroke="#4a9ad8" stroke-width="2.2" stroke-dasharray="1.55 1.0"/><circle r="2.5" fill="none" stroke="#4a9ad8" stroke-width="2.4"/></g></svg>
<div class="t" style="left:101.60px;top:41.83px;font-size:11.5px;color:#bbbbbb;letter-spacing:-0.21px;transform:scaleX(0.889);transform-origin:0 0;">compileLint</div>
<svg style="left:87px;top:42.41999999999999px;" width="11" height="11" viewBox="0 0 11 11"><g transform="translate(5.3 5.5)"><circle r="4.1" fill="none" stroke="#4a9ad8" stroke-width="2.2" stroke-dasharray="1.55 1.0"/><circle r="2.5" fill="none" stroke="#4a9ad8" stroke-width="2.4"/></g></svg>
<div class="t" style="left:101.60px;top:58.49px;font-size:11.5px;color:#bbbbbb;letter-spacing:-0.21px;transform:scaleX(0.889);transform-origin:0 0;">compileReleaseAidl</div>
<svg style="left:87px;top:59.079999999999984px;" width="11" height="11" viewBox="0 0 11 11"><g transform="translate(5.3 5.5)"><circle r="4.1" fill="none" stroke="#4a9ad8" stroke-width="2.2" stroke-dasharray="1.55 1.0"/><circle r="2.5" fill="none" stroke="#4a9ad8" stroke-width="2.4"/></g></svg>
<div class="t" style="left:101.60px;top:75.15px;font-size:11.5px;color:#bbbbbb;letter-spacing:-0.21px;transform:scaleX(0.889);transform-origin:0 0;">compileReleaseJava</div>
<svg style="left:87px;top:75.74000000000001px;" width="11" height="11" viewBox="0 0 11 11"><g transform="translate(5.3 5.5)"><circle r="4.1" fill="none" stroke="#4a9ad8" stroke-width="2.2" stroke-dasharray="1.55 1.0"/><circle r="2.5" fill="none" stroke="#4a9ad8" stroke-width="2.4"/></g></svg>
<div class="t" style="left:101.60px;top:91.81px;font-size:11.5px;color:#bbbbbb;letter-spacing:-0.21px;transform:scaleX(0.889);transform-origin:0 0;">compileReleaseNdk</div>
<svg style="left:87px;top:92.39999999999998px;" width="11" height="11" viewBox="0 0 11 11"><g transform="translate(5.3 5.5)"><circle r="4.1" fill="none" stroke="#4a9ad8" stroke-width="2.2" stroke-dasharray="1.55 1.0"/><circle r="2.5" fill="none" stroke="#4a9ad8" stroke-width="2.4"/></g></svg>
<div class="t" style="left:101.60px;top:108.47px;font-size:11.5px;color:#bbbbbb;letter-spacing:-0.21px;transform:scaleX(0.889);transform-origin:0 0;">compileReleaseRenderscript</div>
<svg style="left:87px;top:109.06px;" width="11" height="11" viewBox="0 0 11 11"><g transform="translate(5.3 5.5)"><circle r="4.1" fill="none" stroke="#4a9ad8" stroke-width="2.2" stroke-dasharray="1.55 1.0"/><circle r="2.5" fill="none" stroke="#4a9ad8" stroke-width="2.4"/></g></svg>
<div class="t" style="left:101.60px;top:125.13px;font-size:11.5px;color:#bbbbbb;letter-spacing:-0.21px;transform:scaleX(0.889);transform-origin:0 0;">compileReleaseUnitTestJava</div>
<svg style="left:87px;top:125.72px;" width="11" height="11" viewBox="0 0 11 11"><g transform="translate(5.3 5.5)"><circle r="4.1" fill="none" stroke="#4a9ad8" stroke-width="2.2" stroke-dasharray="1.55 1.0"/><circle r="2.5" fill="none" stroke="#4a9ad8" stroke-width="2.4"/></g></svg>
<div class="t" style="left:101.60px;top:141.79px;font-size:11.5px;color:#bbbbbb;letter-spacing:-0.21px;transform:scaleX(0.889);transform-origin:0 0;">copyDebugLint</div>
<svg style="left:87px;top:142.38px;" width="11" height="11" viewBox="0 0 11 11"><g transform="translate(5.3 5.5)"><circle r="4.1" fill="none" stroke="#4a9ad8" stroke-width="2.2" stroke-dasharray="1.55 1.0"/><circle r="2.5" fill="none" stroke="#4a9ad8" stroke-width="2.4"/></g></svg>
<div class="t" style="left:101.60px;top:158.45px;font-size:11.5px;color:#bbbbbb;letter-spacing:-0.21px;transform:scaleX(0.889);transform-origin:0 0;">copyReleaseLint</div>
<svg style="left:87px;top:159.03999999999996px;" width="11" height="11" viewBox="0 0 11 11"><g transform="translate(5.3 5.5)"><circle r="4.1" fill="none" stroke="#4a9ad8" stroke-width="2.2" stroke-dasharray="1.55 1.0"/><circle r="2.5" fill="none" stroke="#4a9ad8" stroke-width="2.4"/></g></svg>
<div class="t" style="left:101.60px;top:175.11px;font-size:11.5px;color:#bbbbbb;letter-spacing:-0.21px;transform:scaleX(0.889);transform-origin:0 0;">deleteOldJar</div>
<svg style="left:87px;top:175.7px;" width="11" height="11" viewBox="0 0 11 11"><g transform="translate(5.3 5.5)"><circle r="4.1" fill="none" stroke="#4a9ad8" stroke-width="2.2" stroke-dasharray="1.55 1.0"/><circle r="2.5" fill="none" stroke="#4a9ad8" stroke-width="2.4"/></g></svg>
<div class="t" style="left:101.60px;top:191.77px;font-size:11.5px;color:#bbbbbb;letter-spacing:-0.21px;transform:scaleX(0.889);transform-origin:0 0;">dexDebugAndroidTest</div>
<svg style="left:87px;top:192.36px;" width="11" height="11" viewBox="0 0 11 11"><g transform="translate(5.3 5.5)"><circle r="4.1" fill="none" stroke="#4a9ad8" stroke-width="2.2" stroke-dasharray="1.55 1.0"/><circle r="2.5" fill="none" stroke="#4a9ad8" stroke-width="2.4"/></g></svg>
<div class="t" style="left:101.60px;top:208.43px;font-size:11.5px;color:#e4e4e4;letter-spacing:-0.21px;transform:scaleX(0.889);transform-origin:0 0;">exportJar</div>
<svg style="left:87px;top:209.01999999999998px;" width="11" height="11" viewBox="0 0 11 11"><g transform="translate(5.3 5.5)"><circle r="4.1" fill="none" stroke="#4a9ad8" stroke-width="2.2" stroke-dasharray="1.55 1.0"/><circle r="2.5" fill="none" stroke="#4a9ad8" stroke-width="2.4"/></g></svg>
<div class="t" style="left:101.60px;top:225.09px;font-size:11.5px;color:#bbbbbb;letter-spacing:-0.21px;transform:scaleX(0.889);transform-origin:0 0;">generateDebugAndroidTestAssets</div>
<svg style="left:87px;top:225.68px;" width="11" height="11" viewBox="0 0 11 11"><g transform="translate(5.3 5.5)"><circle r="4.1" fill="none" stroke="#4a9ad8" stroke-width="2.2" stroke-dasharray="1.55 1.0"/><circle r="2.5" fill="none" stroke="#4a9ad8" stroke-width="2.4"/></g></svg>
<div class="t" style="left:101.60px;top:241.75px;font-size:11.5px;color:#bbbbbb;letter-spacing:-0.21px;transform:scaleX(0.889);transform-origin:0 0;">generateDebugAndroidTestBuildConfig</div>
<svg style="left:87px;top:242.34000000000003px;" width="11" height="11" viewBox="0 0 11 11"><g transform="translate(5.3 5.5)"><circle r="4.1" fill="none" stroke="#4a9ad8" stroke-width="2.2" stroke-dasharray="1.55 1.0"/><circle r="2.5" fill="none" stroke="#4a9ad8" stroke-width="2.4"/></g></svg>
<div class="t" style="left:101.60px;top:258.41px;font-size:11.5px;color:#bbbbbb;letter-spacing:-0.21px;transform:scaleX(0.889);transform-origin:0 0;">generateDebugAndroidTestResources</div>
<svg style="left:87px;top:259.0px;" width="11" height="11" viewBox="0 0 11 11"><g transform="translate(5.3 5.5)"><circle r="4.1" fill="none" stroke="#4a9ad8" stroke-width="2.2" stroke-dasharray="1.55 1.0"/><circle r="2.5" fill="none" stroke="#4a9ad8" stroke-width="2.4"/></g></svg>
<div class="t" style="left:101.60px;top:275.07px;font-size:11.5px;color:#bbbbbb;letter-spacing:-0.21px;transform:scaleX(0.889);transform-origin:0 0;">generateDebugAndroidTestResValues</div>
<svg style="left:87px;top:275.65999999999997px;" width="11" height="11" viewBox="0 0 11 11"><g transform="translate(5.3 5.5)"><circle r="4.1" fill="none" stroke="#4a9ad8" stroke-width="2.2" stroke-dasharray="1.55 1.0"/><circle r="2.5" fill="none" stroke="#4a9ad8" stroke-width="2.4"/></g></svg>
<div class="t" style="left:101.60px;top:291.73px;font-size:11.5px;color:#bbbbbb;letter-spacing:-0.21px;transform:scaleX(0.889);transform-origin:0 0;">generateDebugAndroidTestSources</div>
<svg style="left:87px;top:292.32000000000005px;" width="11" height="11" viewBox="0 0 11 11"><g transform="translate(5.3 5.5)"><circle r="4.1" fill="none" stroke="#4a9ad8" stroke-width="2.2" stroke-dasharray="1.55 1.0"/><circle r="2.5" fill="none" stroke="#4a9ad8" stroke-width="2.4"/></g></svg>
<div class="t" style="left:101.60px;top:308.39px;font-size:11.5px;color:#bbbbbb;letter-spacing:-0.21px;transform:scaleX(0.889);transform-origin:0 0;">generateDebugAssets</div>
<svg style="left:87px;top:308.98px;" width="11" height="11" viewBox="0 0 11 11"><g transform="translate(5.3 5.5)"><circle r="4.1" fill="none" stroke="#4a9ad8" stroke-width="2.2" stroke-dasharray="1.55 1.0"/><circle r="2.5" fill="none" stroke="#4a9ad8" stroke-width="2.4"/></g></svg>
<div class="t" style="left:101.60px;top:325.05px;font-size:11.5px;color:#bbbbbb;letter-spacing:-0.21px;transform:scaleX(0.889);transform-origin:0 0;">generateDebugBuildConfig</div>
<svg style="left:87px;top:325.64px;" width="11" height="11" viewBox="0 0 11 11"><g transform="translate(5.3 5.5)"><circle r="4.1" fill="none" stroke="#4a9ad8" stroke-width="2.2" stroke-dasharray="1.55 1.0"/><circle r="2.5" fill="none" stroke="#4a9ad8" stroke-width="2.4"/></g></svg>
<div class="t" style="left:101.60px;top:341.71px;font-size:11.5px;color:#bbbbbb;letter-spacing:-0.21px;transform:scaleX(0.889);transform-origin:0 0;">generateDebugResources</div>
<svg style="left:87px;top:342.29999999999995px;" width="11" height="11" viewBox="0 0 11 11"><g transform="translate(5.3 5.5)"><circle r="4.1" fill="none" stroke="#4a9ad8" stroke-width="2.2" stroke-dasharray="1.55 1.0"/><circle r="2.5" fill="none" stroke="#4a9ad8" stroke-width="2.4"/></g></svg>
<div class="t" style="left:101.60px;top:358.37px;font-size:11.5px;color:#bbbbbb;letter-spacing:-0.21px;transform:scaleX(0.889);transform-origin:0 0;">generateDebugResValues</div>
<svg style="left:87px;top:358.96000000000004px;" width="11" height="11" viewBox="0 0 11 11"><g transform="translate(5.3 5.5)"><circle r="4.1" fill="none" stroke="#4a9ad8" stroke-width="2.2" stroke-dasharray="1.55 1.0"/><circle r="2.5" fill="none" stroke="#4a9ad8" stroke-width="2.4"/></g></svg>
<div class="t" style="left:101.60px;top:375.03px;font-size:11.5px;color:#bbbbbb;letter-spacing:-0.21px;transform:scaleX(0.889);transform-origin:0 0;">generateDebugSources</div>
<svg style="left:87px;top:375.62px;" width="11" height="11" viewBox="0 0 11 11"><g transform="translate(5.3 5.5)"><circle r="4.1" fill="none" stroke="#4a9ad8" stroke-width="2.2" stroke-dasharray="1.55 1.0"/><circle r="2.5" fill="none" stroke="#4a9ad8" stroke-width="2.4"/></g></svg>
<div class="t" style="left:101.60px;top:391.69px;font-size:11.5px;color:#bbbbbb;letter-spacing:-0.21px;transform:scaleX(0.889);transform-origin:0 0;">generateReleaseAssets</div>
<svg style="left:87px;top:392.28px;" width="11" height="11" viewBox="0 0 11 11"><g transform="translate(5.3 5.5)"><circle r="4.1" fill="none" stroke="#4a9ad8" stroke-width="2.2" stroke-dasharray="1.55 1.0"/><circle r="2.5" fill="none" stroke="#4a9ad8" stroke-width="2.4"/></g></svg>
<div class="t" style="left:101.60px;top:408.35px;font-size:11.5px;color:#bbbbbb;letter-spacing:-0.21px;transform:scaleX(0.889);transform-origin:0 0;">generateReleaseBuildConfig</div>
<svg style="left:87px;top:408.94000000000005px;" width="11" height="11" viewBox="0 0 11 11"><g transform="translate(5.3 5.5)"><circle r="4.1" fill="none" stroke="#4a9ad8" stroke-width="2.2" stroke-dasharray="1.55 1.0"/><circle r="2.5" fill="none" stroke="#4a9ad8" stroke-width="2.4"/></g></svg>
<div class="t" style="left:101.60px;top:425.01px;font-size:11.5px;color:#bbbbbb;letter-spacing:-0.21px;transform:scaleX(0.889);transform-origin:0 0;">generateReleaseResources</div>
<svg style="left:87px;top:425.6px;" width="11" height="11" viewBox="0 0 11 11"><g transform="translate(5.3 5.5)"><circle r="4.1" fill="none" stroke="#4a9ad8" stroke-width="2.2" stroke-dasharray="1.55 1.0"/><circle r="2.5" fill="none" stroke="#4a9ad8" stroke-width="2.4"/></g></svg>
<div class="t" style="left:101.60px;top:441.67px;font-size:11.5px;color:#bbbbbb;letter-spacing:-0.21px;transform:scaleX(0.889);transform-origin:0 0;">generateReleaseResValues</div>
<svg style="left:87px;top:442.26px;" width="11" height="11" viewBox="0 0 11 11"><g transform="translate(5.3 5.5)"><circle r="4.1" fill="none" stroke="#4a9ad8" stroke-width="2.2" stroke-dasharray="1.55 1.0"/><circle r="2.5" fill="none" stroke="#4a9ad8" stroke-width="2.4"/></g></svg>
</div>
<div class="t" style="left:22.80px;top:566.21px;font-size:11.5px;color:#a9a9a9;letter-spacing:-0.28px;transform:scaleX(0.857);transform-origin:0 0;">Run</div>
<div class="t" style="left:59.40px;top:566.21px;font-size:11.5px;color:#a9a9a9;letter-spacing:-0.17px;transform:scaleX(0.909);transform-origin:0 0;">ToasterPlugin:app [exportJar]</div>
<div class="t mono" style="left:76.20px;top:584.23px;color:#000;">:app:processReleaseUnitTestJavaRes UP-TO-DATE</div>
<div class="t mono" style="left:76.20px;top:598.42px;color:#000;">:app:compileReleaseUnitTestJava UP-TO-DATE</div>
<div class="t mono" style="left:76.20px;top:612.61px;color:#000;">:app:compileReleaseUnitTestSources UP-TO-DATE</div>
<div class="t mono" style="left:76.20px;top:626.80px;color:#000;">:app:assembleReleaseUnitTest</div>
<div class="t mono" style="left:76.20px;top:640.99px;color:#000;">:app:testRelease</div>
<div class="t mono" style="left:76.20px;top:655.18px;color:#000;">:app:test</div>
<div class="t mono" style="left:76.20px;top:669.37px;color:#000;">:app:check</div>
<div class="t mono" style="left:76.20px;top:683.56px;color:#000;">:app:build</div>
<div class="t mono" style="left:76.20px;top:697.75px;color:#000;">:app:deleteOldJar UP-TO-DATE</div>
<div class="t mono" style="left:76.20px;top:711.94px;color:#000;">:app:exportJar</div>
<div class="t mono" style="left:76.20px;top:726.13px;color:#000;"></div>
<div class="t mono" style="left:76.20px;top:740.32px;color:#000;">BUILD SUCCESSFUL</div>
<div class="t mono" style="left:76.20px;top:754.51px;color:#000;"></div>
<div class="t mono" style="left:76.20px;top:768.70px;color:#000;">Total time: 34.703 secs</div>
<div class="t mono" style="left:76.20px;top:782.89px;color:#1c1ca8;">10:53:00: External task execution finished 'exportJar'.</div>
<div class="t" style="left:39.30px;top:813.01px;font-size:11.5px;color:#bbbbbb;letter-spacing:-0.25px;transform:scaleX(0.870);transform-origin:0 0;">Terminal</div>
<div class="t" style="left:107.40px;top:813.01px;font-size:11.5px;color:#bbbbbb;letter-spacing:-0.17px;transform:scaleX(0.909);transform-origin:0 0;"><span class="u">6</span>: Android</div>
<div class="t" style="left:184.60px;top:813.01px;font-size:11.5px;color:#bbbbbb;letter-spacing:-0.25px;transform:scaleX(0.870);transform-origin:0 0;"><span class="u">0</span>: Messages</div>
<div class="t" style="left:267.50px;top:813.01px;font-size:11.5px;color:#dcdcdc;letter-spacing:-0.25px;transform:scaleX(0.870);transform-origin:0 0;"><span class="u">4</span>: Run</div>
<div class="t" style="left:325.60px;top:813.01px;font-size:11.5px;color:#bbbbbb;letter-spacing:-0.25px;transform:scaleX(0.870);transform-origin:0 0;">TODO</div>
<div class="t" style="left:22.80px;top:829.81px;font-size:11.5px;color:#bbbbbb;letter-spacing:-0.21px;transform:scaleX(0.889);transform-origin:0 0;">Gradle build finished in 4s 93ms (2 minutes ago)</div>
<svg style="left:0px;top:0px;" width="1297" height="843" viewBox="0 0 1297 843"><path d="M186.07 250.00 L189.80 258.76 L193.56 267.51 L197.31 276.27 L201.03 285.02 L204.68 293.78 L208.26 302.54 L211.74 311.29 L215.10 320.05 L218.32 328.80 L221.41 337.56 L224.35 346.32 L227.13 355.07 L229.75 363.83 L232.20 372.58 L234.49 381.34 L236.62 390.09 L238.59 398.85 L240.40 407.61 L242.06 416.36 L243.59 425.12 L244.97 433.87 L246.24 442.63 L247.39 451.39 L248.44 460.14 L249.40 468.90 L250.28 477.65 L251.10 486.41 L251.86 495.17 L252.59 503.92 L253.30 512.68 L253.99 521.43 L254.69 530.19 L255.41 538.95 L256.15 547.70 L256.94 556.46 L257.79 565.21 L258.70 573.97 L259.68 582.73 L260.75 591.48 L261.91 600.24 L263.18 608.99 L264.55 617.75 L266.03 626.51 L267.62 635.26 L269.33 644.02 L271.14 652.77 L273.07 661.53 L275.10 670.28 L277.23 679.04 L279.45 687.80 L281.74 696.55 L284.10 705.31 L286.50 714.06 L288.92 722.82 L291.35 731.58 L293.75 740.33 L296.10 749.09 L298.36 757.84 L300.51 766.60" fill="none" stroke="#ff8800" stroke-width="6.5"/><path d="M176.1 228.2 L174.5 261 L202 249.2Z" fill="#ff8800"/><path d="M1154.50 318.90 L1141.14 325.82 L1127.77 332.76 L1114.41 339.71 L1101.04 346.67 L1087.68 353.64 L1074.31 360.61 L1060.95 367.57 L1047.58 374.53 L1034.22 381.49 L1020.86 388.43 L1007.49 395.37 L994.13 402.29 L980.76 409.20 L967.40 416.09 L954.03 422.97 L940.67 429.83 L927.31 436.68 L913.94 443.51 L900.58 450.32 L887.21 457.12 L873.85 463.91 L860.48 470.68 L847.12 477.45 L833.75 484.20 L820.39 490.95 L807.03 497.69 L793.66 504.43 L780.30 511.17 L766.93 517.92 L753.57 524.68 L740.20 531.45 L726.84 538.24 L713.47 545.05 L700.11 551.88 L686.75 558.75 L673.38 565.66 L660.02 572.61 L646.65 579.60 L633.29 586.66 L619.92 593.77 L606.56 600.96 L593.19 608.22 L579.83 615.56 L566.47 623.00 L553.10 630.53 L539.74 638.18 L526.37 645.94 L513.01 653.83 L499.64 661.85 L486.28 670.02 L472.92 678.34 L459.55 686.83 L446.19 695.50 L432.82 704.35 L419.46 713.40 L406.09 722.65 L392.73 732.13 L379.36 741.84 L366.00 751.80" fill="none" stroke="#ffd200" stroke-width="6.8"/><path d="M346 765.8 L361.7 736.4 L379.1 760.5Z" fill="#ffd200"/></svg>
</body></html>
